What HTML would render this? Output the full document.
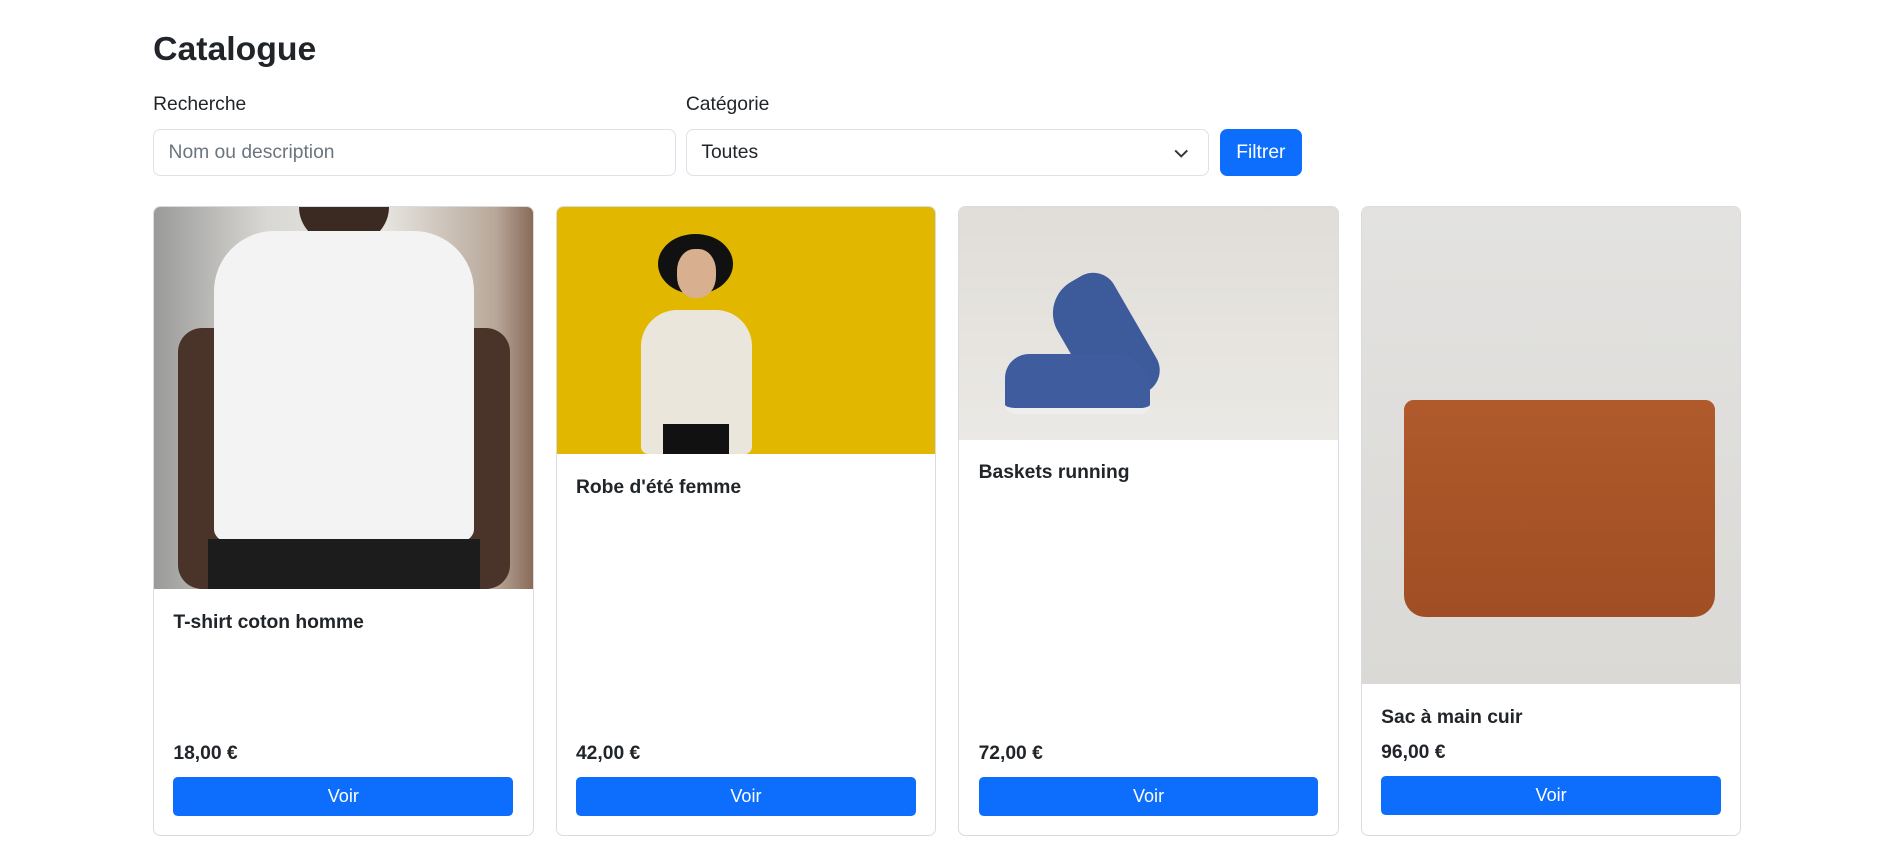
<!DOCTYPE html>
<html><head><meta charset="utf-8">
<style>
html,body{margin:0;padding:0;background:#fff;overflow:hidden}
#w{zoom:1.2054;width:1568px;height:710px;position:relative;font-family:"Liberation Sans",sans-serif;color:#212529;font-size:16px}
h3{position:absolute;left:127px;top:24px;margin:0;font-size:28px;font-weight:600;line-height:34px}
.lbl{position:absolute;top:77px;font-size:16px;line-height:20px}
.inp{position:absolute;top:107px;height:37px;border:1px solid #dee2e6;border-radius:6px;box-sizing:content-box;display:flex;align-items:center;padding-left:12px;font-size:16px;padding-top:2px;height:35px}
.btn{position:absolute;background:#0d6efd;color:#fff;border-radius:6px;text-align:center}
.card{position:absolute;top:171px;width:314px;height:521px;border:1px solid #d9dcdf;border-radius:6px;overflow:hidden;display:flex;flex-direction:column}
.img{width:100%;position:relative;overflow:hidden;flex:none}
.body{flex:1;padding:16px;display:flex;flex-direction:column}
.t{font-weight:600;font-size:16px;line-height:20px;margin-top:2px}
.p{margin-top:auto;font-weight:700;line-height:24px}
.v{margin-top:7px;height:32px;line-height:32px;background:#0d6efd;color:#fff;border-radius:4px;text-align:center;font-size:15px}
</style></head><body><div id="w">
<h3>Catalogue</h3>
<div class="lbl" style="left:127px">Recherche</div>
<div class="lbl" style="left:569px">Catégorie</div>
<div class="inp" style="left:127px;width:420px;color:#6c757d">Nom ou description</div>
<div class="inp" style="left:569px;width:420px">Toutes
<svg style="position:absolute;right:16px;top:15px" width="12" height="9" viewBox="0 0 12 9"><path d="M1 2l5 5 5-5" stroke="#333" stroke-width="1.6" fill="none"/></svg></div>
<div class="btn" style="left:1012px;top:107px;width:68px;height:39px;line-height:39px">Filtrer</div>

<div class="card" style="left:127px">
 <div class="img" style="height:317px;background:linear-gradient(90deg,#9a9a98,#d9d8d5 30%,#e8e6e2 60%,#b8a89a 90%,#8a6a58)">
  <div style="position:absolute;left:120px;top:0;width:75px;height:30px;background:#3a2a22;border-radius:0 0 30px 30px"></div>
  <div style="position:absolute;left:20px;top:100px;width:50px;height:217px;background:#4a342a;border-radius:20px"></div>
  <div style="position:absolute;left:245px;top:100px;width:50px;height:217px;background:#4a342a;border-radius:20px"></div>
  <div style="position:absolute;left:50px;top:20px;width:215px;height:257px;background:#f3f3f3;border-radius:50px 50px 10px 10px"></div>
  <div style="position:absolute;left:45px;top:275px;width:225px;height:42px;background:#1c1c1c"></div>
 </div>
 <div class="body"><div class="t">T-shirt coton homme</div><div class="p">18,00 €</div><div class="v">Voir</div></div>
</div>

<div class="card" style="left:461px">
 <div class="img" style="height:205px;background:#e2b700">
  <div style="position:absolute;left:84px;top:22px;width:62px;height:50px;background:#111;border-radius:50%"></div>
  <div style="position:absolute;left:100px;top:35px;width:32px;height:40px;background:#d8b090;border-radius:45%"></div>
  <div style="position:absolute;left:70px;top:85px;width:92px;height:120px;background:#ebe6dc;border-radius:30px 30px 6px 6px"></div>
  <div style="position:absolute;left:88px;top:180px;width:55px;height:25px;background:#111"></div>
 </div>
 <div class="body"><div class="t">Robe d'été femme</div><div class="p">42,00 €</div><div class="v">Voir</div></div>
</div>

<div class="card" style="left:795px">
 <div class="img" style="height:193px;background:linear-gradient(180deg,#e0ddd8,#ebe9e5)">
  <div style="position:absolute;left:90px;top:55px;width:60px;height:110px;background:#3d5a9a;border-radius:30px 20px 20px 30px;transform:rotate(-30deg)"></div>
  <div style="position:absolute;left:38px;top:122px;width:120px;height:45px;background:#3f5d9e;border-radius:20px 30px 8px 8px;border-bottom:5px solid #eee"></div>
 </div>
 <div class="body"><div class="t">Baskets running</div><div class="p">72,00 €</div><div class="v">Voir</div></div>
</div>

<div class="card" style="left:1129px">
 <div class="img" style="height:396px;background:linear-gradient(180deg,#e3e2e0,#dad9d6)">
  <div style="position:absolute;left:35px;top:160px;width:258px;height:180px;background:linear-gradient(180deg,#b05a2c,#a04e24);border-radius:8px 8px 18px 18px"></div>
 </div>
 <div class="body"><div class="t">Sac à main cuir</div><div class="p" style="margin-top:7px">96,00 €</div><div class="v">Voir</div></div>
</div>
</div></body></html>
